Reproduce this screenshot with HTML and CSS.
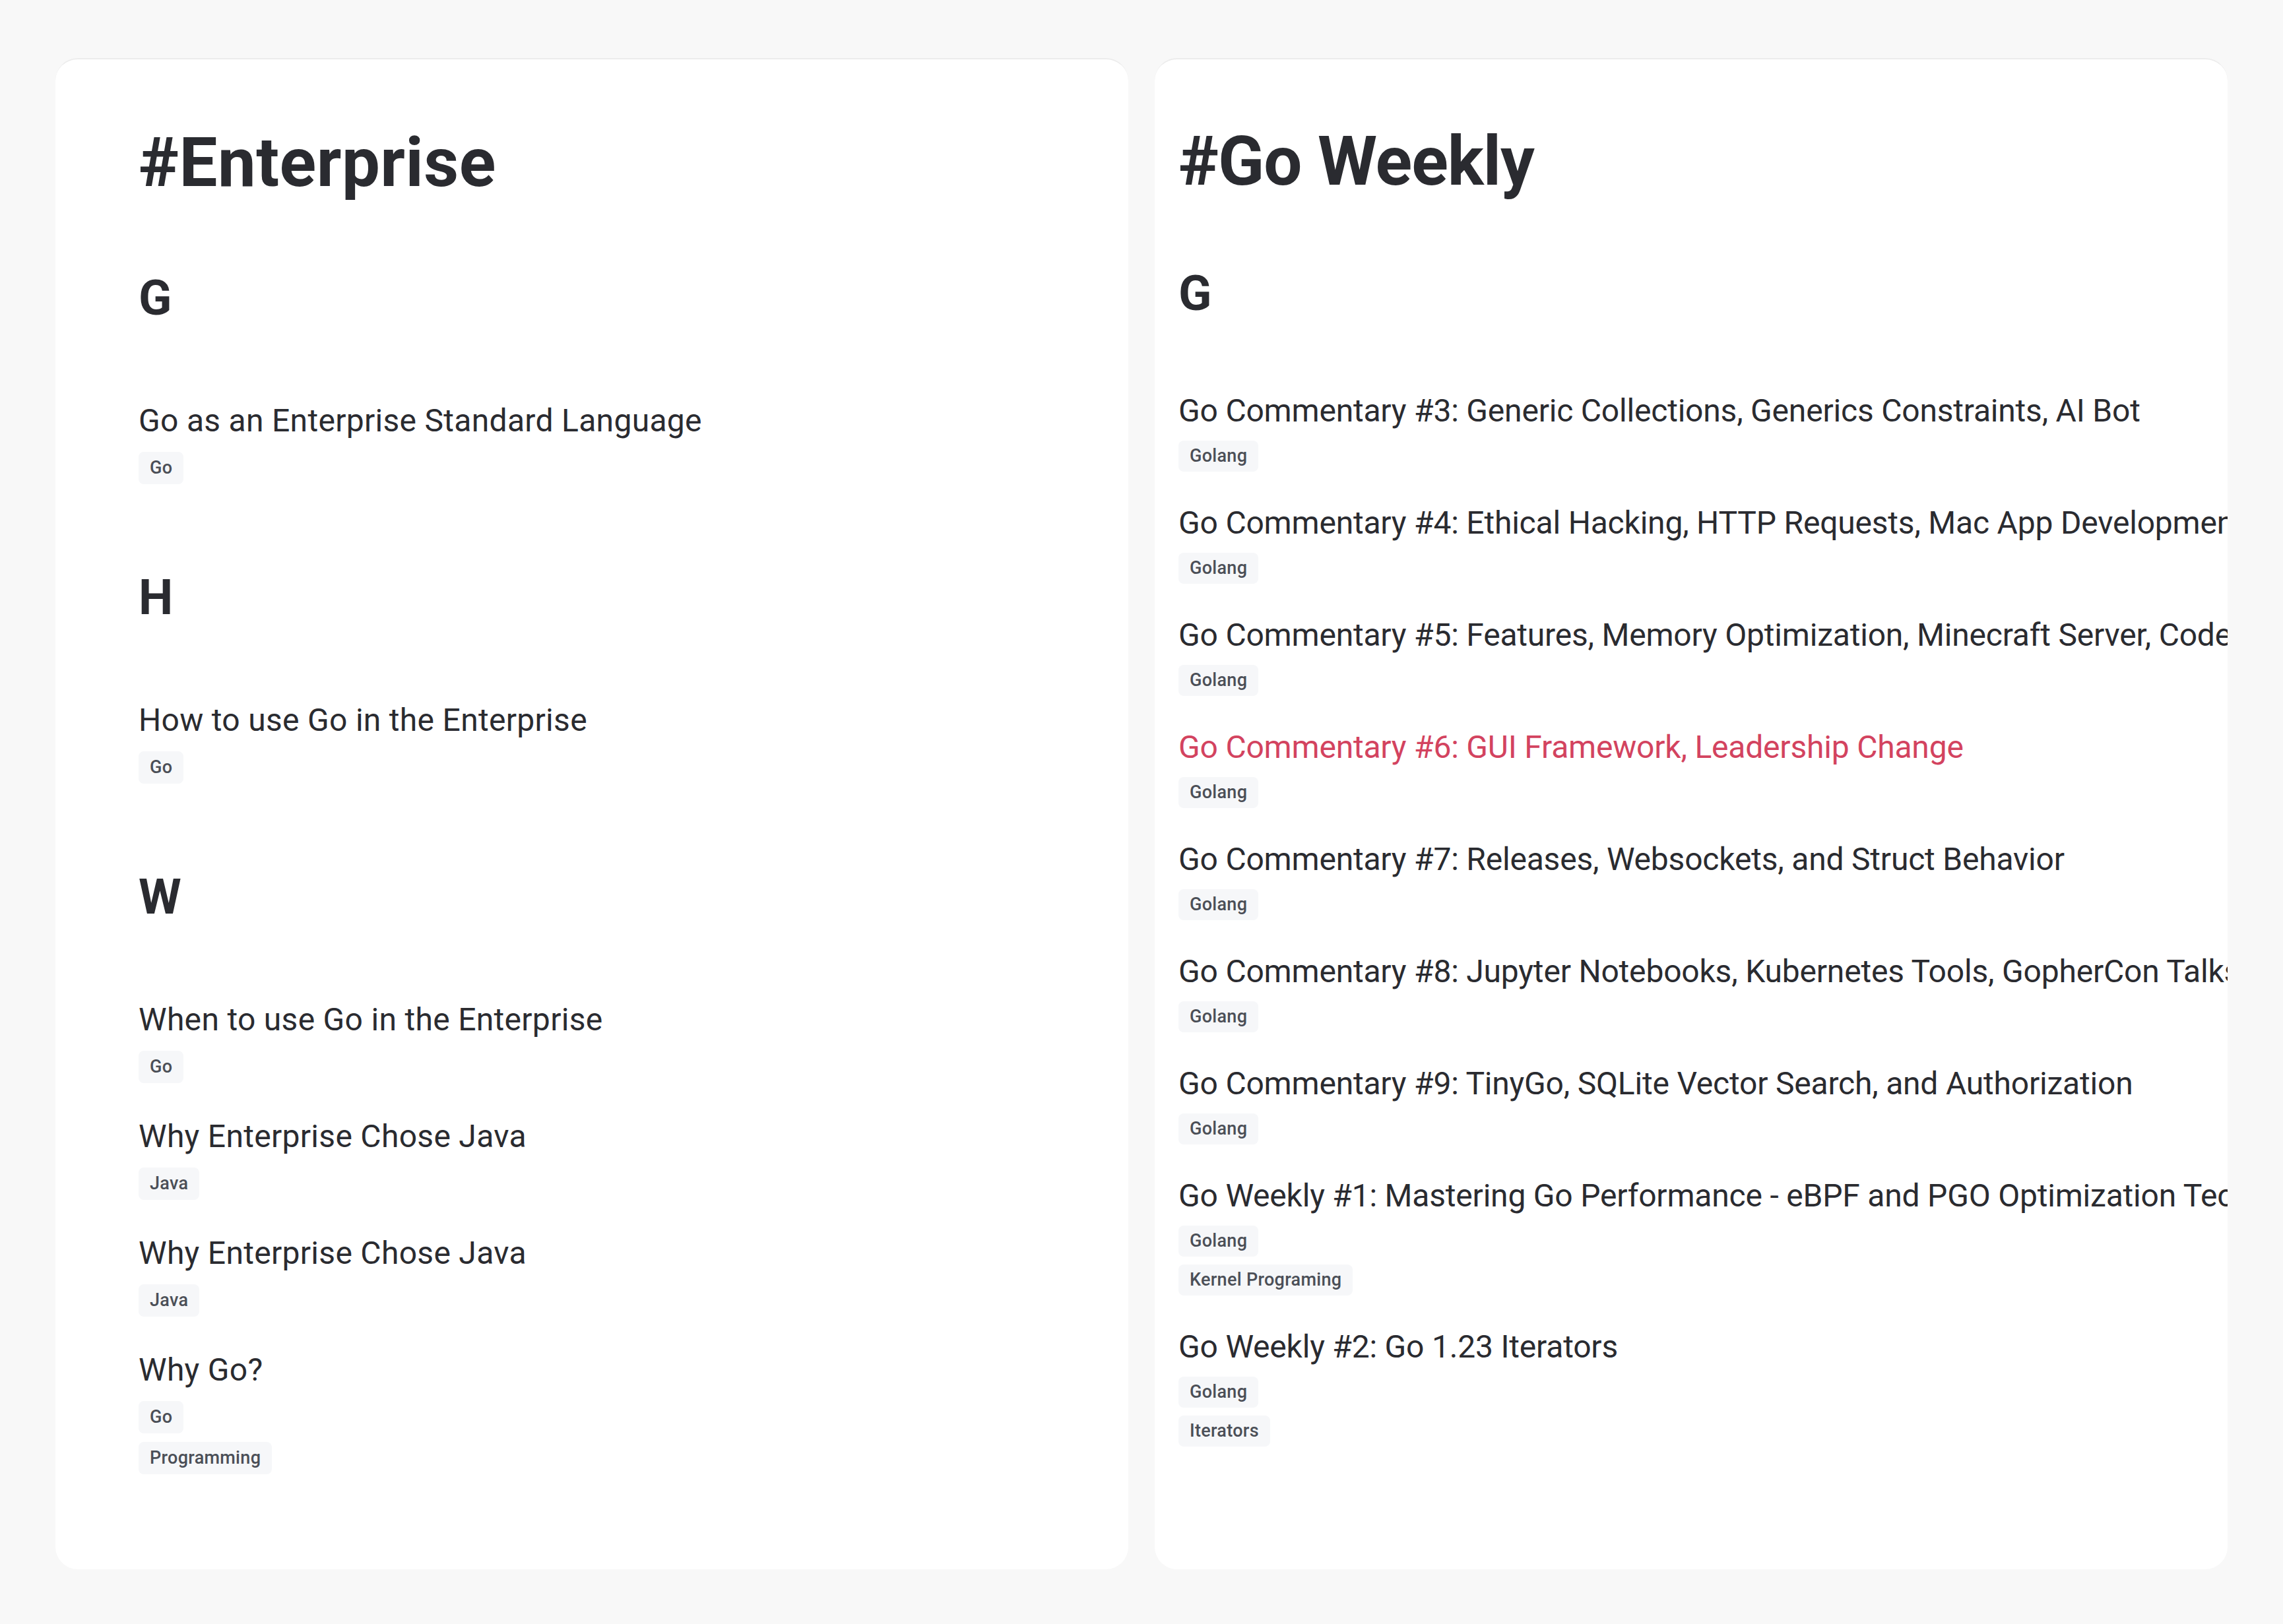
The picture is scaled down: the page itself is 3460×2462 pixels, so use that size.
FILE: index.html
```html
<!DOCTYPE html>
<html lang="en">
<head>
<meta charset="utf-8">
<title>Tags</title>
<link rel="stylesheet" href="styles.css">
</head>
<body>
<main class="page">
  <article class="card card-left">
    <h1 class="card-title">#Enterprise</h1>
    <section class="section">
      <h2 class="letter">G</h2>
      <ul class="items">
        <li class="item">
          <a class="title" href="#">Go as an Enterprise Standard Language</a>
          <div class="tags"><span class="tag">Go</span></div>
        </li>
      </ul>
    </section>
    <section class="section">
      <h2 class="letter">H</h2>
      <ul class="items">
        <li class="item">
          <a class="title" href="#">How to use Go in the Enterprise</a>
          <div class="tags"><span class="tag">Go</span></div>
        </li>
      </ul>
    </section>
    <section class="section">
      <h2 class="letter">W</h2>
      <ul class="items">
        <li class="item">
          <a class="title" href="#">When to use Go in the Enterprise</a>
          <div class="tags"><span class="tag">Go</span></div>
        </li>
        <li class="item">
          <a class="title" href="#">Why Enterprise Chose Java</a>
          <div class="tags"><span class="tag">Java</span></div>
        </li>
        <li class="item">
          <a class="title" href="#">Why Enterprise Chose Java</a>
          <div class="tags"><span class="tag">Java</span></div>
        </li>
        <li class="item">
          <a class="title" href="#">Why Go?</a>
          <div class="tags"><span class="tag">Go</span><span class="tag">Programming</span></div>
        </li>
      </ul>
    </section>
  </article>

  <article class="card card-right">
    <h1 class="card-title">#Go Weekly</h1>
    <section class="section">
      <h2 class="letter">G</h2>
      <ul class="items">
        <li class="item">
          <a class="title" href="#">Go Commentary #3: Generic Collections, Generics Constraints, AI Bot</a>
          <div class="tags"><span class="tag">Golang</span></div>
        </li>
        <li class="item">
          <a class="title" href="#">Go Commentary #4: Ethical Hacking, HTTP Requests, Mac App Development</a>
          <div class="tags"><span class="tag">Golang</span></div>
        </li>
        <li class="item">
          <a class="title" href="#">Go Commentary #5: Features, Memory Optimization, Minecraft Server, Code</a>
          <div class="tags"><span class="tag">Golang</span></div>
        </li>
        <li class="item">
          <a class="title title-active" href="#">Go Commentary #6: GUI Framework, Leadership Change</a>
          <div class="tags"><span class="tag">Golang</span></div>
        </li>
        <li class="item">
          <a class="title" href="#">Go Commentary #7: Releases, Websockets, and Struct Behavior</a>
          <div class="tags"><span class="tag">Golang</span></div>
        </li>
        <li class="item">
          <a class="title" href="#">Go Commentary #8: Jupyter Notebooks, Kubernetes Tools, GopherCon Talks</a>
          <div class="tags"><span class="tag">Golang</span></div>
        </li>
        <li class="item">
          <a class="title" href="#">Go Commentary #9: TinyGo, SQLite Vector Search, and Authorization</a>
          <div class="tags"><span class="tag">Golang</span></div>
        </li>
        <li class="item">
          <a class="title" href="#">Go Weekly #1: Mastering Go Performance - eBPF and PGO Optimization Techniques</a>
          <div class="tags"><span class="tag">Golang</span><span class="tag">Kernel Programing</span></div>
        </li>
        <li class="item">
          <a class="title" href="#">Go Weekly #2: Go 1.23 Iterators</a>
          <div class="tags"><span class="tag">Golang</span><span class="tag">Iterators</span></div>
        </li>
      </ul>
    </section>
  </article>
</main>
</body>
</html>
```

FILE: styles.css
```css
html, body {
  margin: 0;
  padding: 0;
}

body {
  background: #f8f8f8;
  font-family: Roboto, "Liberation Sans", Arial, sans-serif;
  color: #2a2b30;
}

.page {
  display: grid;
  grid-template-columns: 1fr 1fr;
  gap: 40px;
  padding: 88px 84px 83px;
}

.card {
  background: #ffffff;
  border-radius: 34px;
  border-top: 2px solid #ececec;
  overflow: hidden;
  box-sizing: border-box;
  min-width: 0;
}

.card-left {
  padding: 97px 40px 144px 126px;
}

.card-right {
  padding: 95px 0 0 36px;
}

.card-title {
  margin: 0 0 100px;
  font-size: 103px;
  line-height: 120px;
  font-weight: 700;
  letter-spacing: 0.5px;
  color: #2a2b30;
  white-space: nowrap;
}

.card-right .card-title {
  margin-bottom: 95px;
  letter-spacing: -1px;
}

.section + .section {
  margin-top: 127px;
}

.letter {
  margin: 0 0 109px;
  font-size: 74px;
  line-height: 90px;
  font-weight: 700;
  color: #2a2b30;
}

.card-right .letter {
  margin-bottom: 101px;
}

.items {
  list-style: none;
  margin: 0;
  padding: 0;
  display: flex;
  flex-direction: column;
  gap: 49px;
}

.card-right .items {
  gap: 46px;
}

.item {
  display: flex;
  flex-direction: column;
  align-items: flex-start;
}

.title {
  display: block;
  font-size: 48px;
  line-height: 64px;
  letter-spacing: 0.3px;
  color: #2a2b30;
  text-decoration: none;
  white-space: nowrap;
}

.card-right .title {
  letter-spacing: -0.2px;
}

.title-active {
  color: #d3435f;
}

.tags {
  display: flex;
  flex-direction: column;
  align-items: flex-start;
  gap: 13px;
  margin-top: 15px;
}

.card-right .tags {
  gap: 12px;
  margin-top: 13px;
}

.tag {
  display: inline-block;
  background: #f6f7f9;
  color: #4b4f57;
  font-size: 27px;
  font-weight: 500;
  line-height: 49px;
  letter-spacing: 0.3px;
  padding: 0 17px;
  border-radius: 8px;
}

.card-right .tag {
  line-height: 47px;
}
```
